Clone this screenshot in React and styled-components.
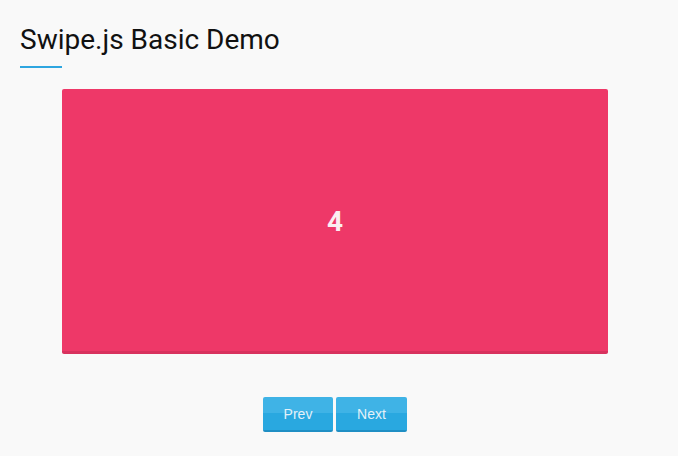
import styled, { createGlobalStyle } from "styled-components";

const GlobalStyle = createGlobalStyle`
    body {
        margin: 0;
        background: #f9f9f9;
        font-family: Roboto, "Liberation Sans", sans-serif;
    }
`;

const App = () => {
    return (
        <PageStyled className="Page">
            <GlobalStyle />
            <Header>
                <Title>Swipe.js Basic Demo</Title>
                <Underline />
            </Header>
            <Slide>4</Slide>
            <Controls>
                <Button>Prev</Button>
                <Button $wide>Next</Button>
            </Controls>
        </PageStyled>
    );
};

export default App;

const PageStyled = styled.div`
    width: 670px;
    padding-top: 22px;
`;

const Header = styled.div`
    padding-left: 20px;
    margin-bottom: 21px;
`;

const Title = styled.h1`
    margin: 0;
    font-size: 28px;
    font-weight: 400;
    line-height: 36px;
    color: #111;
`;

const Underline = styled.div`
    width: 42px;
    height: 2px;
    margin-top: 8px;
    background: #2ea6e0;
`;

const Slide = styled.div`
    width: 546px;
    height: 259px;
    margin: 0 auto;
    padding-top: 3px;
    box-sizing: content-box;
    display: flex;
    align-items: center;
    justify-content: center;
    background: #ee3868;
    border-bottom: 3px solid #d8325e;
    border-radius: 2px;
    color: #fbeef1;
    font-size: 28px;
    font-weight: 700;
`;

const Controls = styled.div`
    display: flex;
    justify-content: center;
    gap: 3px;
    margin-top: 43px;
`;

const Button = styled.button`
    width: ${(props) => (props.$wide ? "71px" : "70px")};
    height: 35px;
    padding: 0;
    border: none;
    border-bottom: 2px solid #1f8fc4;
    border-radius: 2px;
    background: linear-gradient(#3fb3e6 0%, #3fb3e6 47%, #29a8e0 50%, #29a8e0 100%);
    color: #e3f1f9;
    font-family: "Liberation Sans", Arial, sans-serif;
    font-size: 14px;
    cursor: pointer;
`;
